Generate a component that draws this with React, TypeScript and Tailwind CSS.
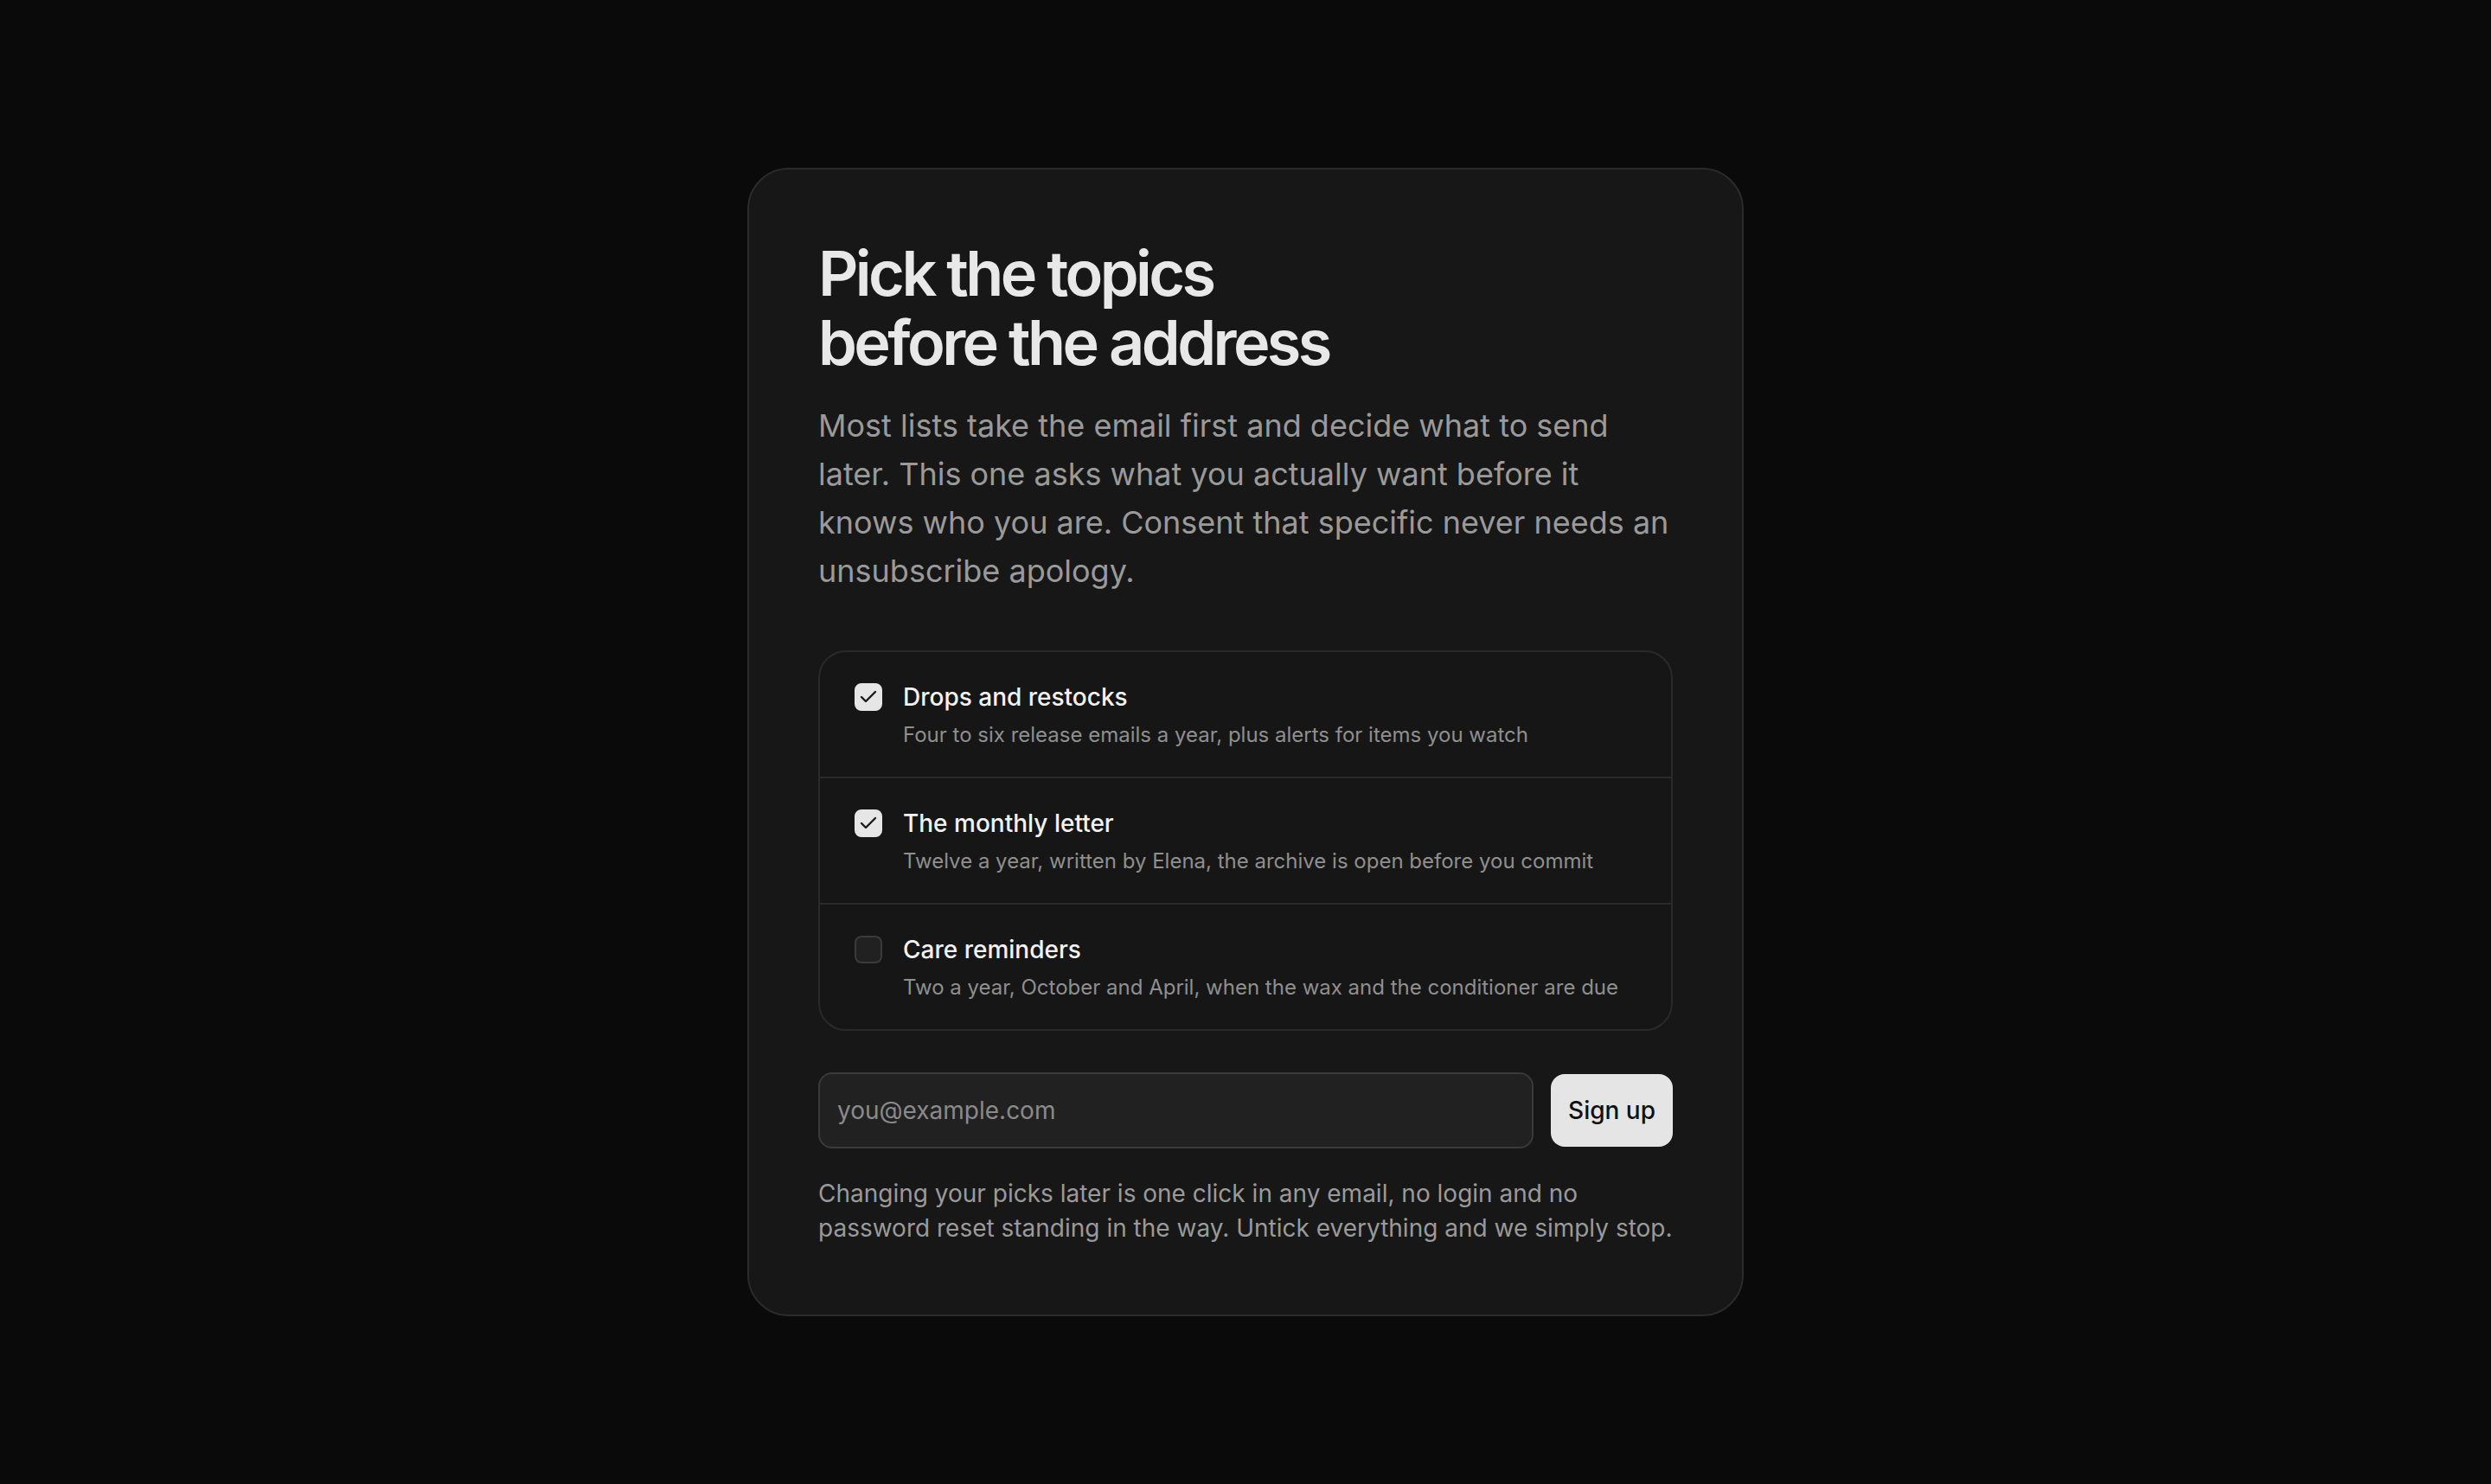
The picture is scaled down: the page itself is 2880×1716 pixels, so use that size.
import React, { useState } from "react";

type Topic = { id: string; title: string; desc: string };

const topics: Topic[] = [
  { id: "drops", title: "Drops and restocks", desc: "Four to six release emails a year, plus alerts for items you watch" },
  { id: "letter", title: "The monthly letter", desc: "Twelve a year, written by Elena, the archive is open before you commit" },
  { id: "care", title: "Care reminders", desc: "Two a year, October and April, when the wax and the conditioner are due" },
];

function Box({ checked }: { checked: boolean }) {
  return checked ? (
    <span className="mt-1 flex h-8 w-8 shrink-0 items-center justify-center rounded-[8px] bg-[#e6e6e6]">
      <svg width="24" height="24" viewBox="0 0 24 24" fill="none" stroke="#1a1a1a" strokeWidth="2.4" strokeLinecap="round" strokeLinejoin="round">
        <path d="M20 6 9 17l-5-5" />
      </svg>
    </span>
  ) : (
    <span className="mt-1 block h-8 w-8 shrink-0 rounded-[8px] border-2 border-[#3a3a3a] bg-[#212121]" />
  );
}

export default function App() {
  const [sel, setSel] = useState<Record<string, boolean>>({ drops: true, letter: true, care: false });
  return (
    <div className="flex min-h-screen items-center justify-center bg-[#0a0a0a]" style={{ fontFamily: "Inter, 'Noto Sans', sans-serif" }}>
      <div className="w-[1152px] rounded-[48px] border-2 border-[#2b2b2b] bg-[#171717] p-20">
        <h1 className="text-[72px] font-semibold leading-[80px] tracking-[-0.05em] text-[#e8e8e8]">
          Pick the topics
          <br />
          before the address
        </h1>
        <p className="mt-7 text-[36px] leading-[56px] text-[#9a9a9a]">
          Most lists take the email first and decide what to send later. This one asks what you actually want before it knows who you are. Consent that specific never needs an unsubscribe apology.
        </p>
        <div className="mt-16 overflow-hidden rounded-[32px] border-2 border-[#2a2a2a] bg-[#161616]">
          {topics.map((t, i) => (
            <div
              key={t.id}
              onClick={() => setSel({ ...sel, [t.id]: !sel[t.id] })}
              className={`flex cursor-pointer items-start gap-6 px-10 py-8 ${i > 0 ? "border-t-2 border-[#2a2a2a]" : ""}`}
            >
              <Box checked={!!sel[t.id]} />
              <div className="flex flex-col">
                <span className="text-[28px] font-medium leading-[40px] text-[#f2f2f2]">{t.title}</span>
                <span className="mt-2 text-[24px] leading-[32px] text-[#8f8f8f]">{t.desc}</span>
              </div>
            </div>
          ))}
        </div>
        <div className="mt-12 flex items-center gap-5">
          <input
            type="email"
            placeholder="you@example.com"
            className="h-[88px] min-w-0 flex-1 rounded-2xl border-2 border-[#3a3a3a] bg-[#212121] px-5 text-[28px] text-[#e5e5e5] placeholder:text-[#8a8a8a] outline-none"
          />
          <button className="h-[84px] rounded-2xl bg-[#e5e5e5] px-5 text-[28px] font-medium text-[#111111]">Sign up</button>
        </div>
        <p className="mt-8 text-[28px] leading-[40px] text-[#9a9a9a]">
          Changing your picks later is one click in any email, no login and no password reset standing in the way. Untick everything and we simply stop.
        </p>
      </div>
    </div>
  );
}
